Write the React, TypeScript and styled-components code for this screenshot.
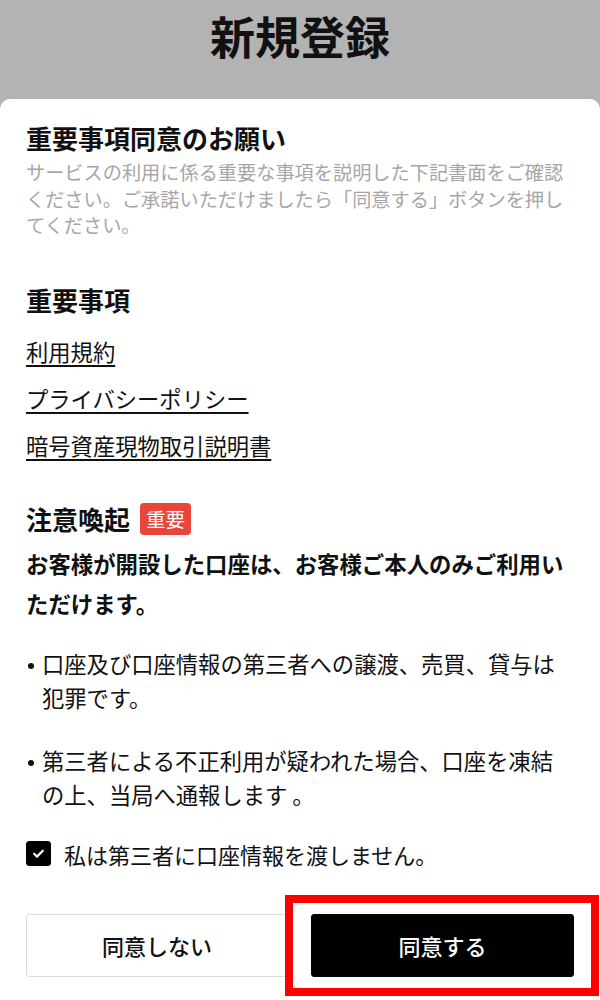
import React, { useState } from "react";
import styled, { createGlobalStyle } from "styled-components";

const GlobalStyle = createGlobalStyle`
  html, body {
    margin: 0;
    padding: 0;
    background: #b3b3b3;
    font-family: "Noto Sans CJK JP", "Noto Sans", sans-serif;
    color: #111;
  }
  * { box-sizing: border-box; }
`;

const links = ["利用規約", "プライバシーポリシー", "暗号資産現物取引説明書"];

const warnings = [
  "口座及び口座情報の第三者への譲渡、売買、貸与は犯罪です。",
  "第三者による不正利用が疑われた場合、口座を凍結の上、当局へ通報します 。",
];

export default function App() {
  const [checked, setChecked] = useState(true);

  return (
    <Page>
      <GlobalStyle />
      <Header>
        <Title>新規登録</Title>
      </Header>
      <Card>
        <SectionTitle>重要事項同意のお願い</SectionTitle>
        <Description>
          サービスの利用に係る重要な事項を説明した下記書面をご確認ください。ご承諾いただけましたら「同意する」ボタンを押してください。
        </Description>

        <SectionTitle $top={43}>重要事項</SectionTitle>
        <LinkList>
          {links.map((l) => (
            <DocLink key={l} href="#">
              {l}
            </DocLink>
          ))}
        </LinkList>

        <TitleRow>
          <SectionTitle>注意喚起</SectionTitle>
          <Badge>重要</Badge>
        </TitleRow>
        <Notice>お客様が開設した口座は、お客様ご本人のみご利用いただけます。</Notice>

        <Bullets>
          {warnings.map((w) => (
            <Bullet key={w}>{w}</Bullet>
          ))}
        </Bullets>

        <CheckRow onClick={() => setChecked(!checked)}>
          <CheckBox $on={checked}>
            {checked && (
              <svg width="15" height="15" viewBox="0 0 24 24" fill="none">
                <path
                  d="M5 12.5l4.5 4.5L19 7.5"
                  stroke="#fff"
                  strokeWidth="3.4"
                  strokeLinecap="round"
                  strokeLinejoin="round"
                />
              </svg>
            )}
          </CheckBox>
          <CheckLabel>私は第三者に口座情報を渡しません。</CheckLabel>
        </CheckRow>

        <ButtonRow>
          <Button>同意しない</Button>
          <Highlighted>
            <Button $primary>同意する</Button>
            <RedFrame />
          </Highlighted>
        </ButtonRow>
      </Card>
    </Page>
  );
}

const Page = styled.div`
  width: 600px;
  min-height: 1000px;
  display: flex;
  flex-direction: column;
  background: #b3b3b3;
`;

const Header = styled.header`
  height: 99px;
  display: flex;
  justify-content: center;
  padding-top: 7px;
`;

const Title = styled.h1`
  margin: 0;
  font-size: 45px;
  line-height: 58px;
  font-weight: 700;
  color: #111;
`;

const Card = styled.main`
  flex: 1;
  background: #fff;
  border-radius: 10px 10px 0 0;
  padding: 21px 26px 0;
  display: flex;
  flex-direction: column;
`;

const SectionTitle = styled.h2<{ $top?: number }>`
  margin: ${(p) => p.$top ?? 0}px 0 0;
  font-size: 26px;
  line-height: 36px;
  font-weight: 700;
  color: #111;
`;

const Description = styled.p`
  margin: 3px 0 0;
  font-size: 19.2px;
  line-height: 26.5px;
  color: #a6a6a6;
`;

const LinkList = styled.div`
  margin-top: 18px;
  display: flex;
  flex-direction: column;
  align-items: flex-start;
  gap: 17px;
`;

const DocLink = styled.a`
  font-size: 22.3px;
  line-height: 30px;
  color: #111;
  text-decoration: underline;
  text-underline-offset: 4px;
  text-decoration-thickness: 1.5px;
`;

const TitleRow = styled.div`
  margin-top: 41px;
  display: flex;
  align-items: center;
  gap: 10px;
`;

const Badge = styled.span`
  background: #e8463b;
  color: #fff;
  font-size: 19.5px;
  line-height: 32px;
  padding: 0 6px;
  border-radius: 4px;
`;

const Notice = styled.p`
  margin: 6px 0 0;
  font-size: 22.4px;
  line-height: 40px;
  font-weight: 700;
  color: #111;
`;

const Bullets = styled.ul`
  margin: 23px 0 0;
  padding: 0 10px 0 16px;
  list-style: none;
  display: flex;
  flex-direction: column;
  gap: 29px;
`;

const Bullet = styled.li`
  position: relative;
  font-size: 22.3px;
  line-height: 34px;
  color: #111;

  &::before {
    content: "";
    position: absolute;
    left: -14px;
    top: 17px;
    width: 6px;
    height: 6px;
    border-radius: 50%;
    background: #111;
  }
`;

const CheckRow = styled.label`
  margin-top: 28px;
  display: flex;
  align-items: center;
  gap: 13px;
  cursor: pointer;
`;

const CheckBox = styled.span<{ $on: boolean }>`
  width: 25px;
  height: 25px;
  border-radius: 3px;
  background: ${(p) => (p.$on ? "#000" : "#fff")};
  border: 1px solid #000;
  display: flex;
  align-items: center;
  justify-content: center;
`;

const CheckLabel = styled.span`
  font-size: 22px;
  line-height: 30px;
  color: #111;
`;

const ButtonRow = styled.div`
  margin-top: 45px;
  display: grid;
  grid-template-columns: 262px 263px;
  gap: 23px;
`;

const Highlighted = styled.div`
  position: relative;
  display: flex;
`;

const Button = styled.button<{ $primary?: boolean }>`
  width: 100%;
  height: 63px;
  border-radius: 3px;
  border: 1px solid ${(p) => (p.$primary ? "#000" : "#dcdcdc")};
  background: ${(p) => (p.$primary ? "#000" : "#fff")};
  color: ${(p) => (p.$primary ? "#fff" : "#111")};
  font-family: "Noto Sans CJK JP", sans-serif;
  font-size: 22px;
  font-weight: 500;
`;

const RedFrame = styled.div`
  position: absolute;
  left: -26px;
  top: -19px;
  width: 314px;
  height: 101px;
  border: 8px solid #ff0000;
  pointer-events: none;
`;
